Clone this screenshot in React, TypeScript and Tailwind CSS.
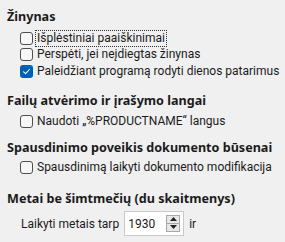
import React from "react";

const reg = { fontFamily: 'Roboto, "Liberation Sans", sans-serif' };
const bold = { fontFamily: '"Noto Sans", Roboto, sans-serif' };

function Box({ checked }: { checked?: boolean }) {
  if (checked) {
    return (
      <span className="w-[13px] h-[13px] rounded-[3px] bg-[#005fb8] flex items-center justify-center shrink-0">
        <svg width="9" height="9" viewBox="0 0 9 9">
          <path d="M1.6 4.9 L3.6 6.7 L7.4 2.5" fill="none" stroke="white" strokeWidth="1.1" strokeLinecap="round" strokeLinejoin="round" />
        </svg>
      </span>
    );
  }
  return <span className="w-[13px] h-[13px] rounded-[3px] border border-[#4f4f4f] bg-[#f7f7f7] shrink-0" />;
}

function Check({ label, checked, focus, className = "" }: { label: string; checked?: boolean; focus?: boolean; className?: string }) {
  return (
    <div className={"flex items-center pl-[20px] h-[16.5px] whitespace-nowrap " + className}>
      <Box checked={checked} />
      <span
        className={
          focus
            ? "ml-[3px] px-[1px] leading-[15px] outline outline-1 outline-dotted outline-[#333]"
            : "ml-[3px] px-[1px] leading-[15px]"
        }
      >
        {label}
      </span>
    </div>
  );
}

function Heading({ children, className = "" }: { children: React.ReactNode; className?: string }) {
  return (
    <div className={"h-[16px] flex items-center font-bold pl-[7px] text-[12.6px] whitespace-nowrap " + className} style={bold}>
      {children}
    </div>
  );
}

export default function App() {
  return (
    <div className="w-[285px] h-[242px] bg-[#f0f0f0] text-[12px] text-[#1b1b1b] overflow-hidden" style={reg}>
      <div className="pt-[9px] flex flex-col">
        <Heading>Žinynas</Heading>
        <Check className="mt-[5px]" label="Išplėstiniai paaiškinimai" focus />
        <Check label="Perspėti, jei neįdiegtas žinynas" />
        <Check label="Paleidžiant programą rodyti dienos patarimus" checked />
        <Heading className="mt-[13.5px]">Failų atvėrimo ir įrašymo langai</Heading>
        <Check className="mt-[4.5px]" label="Naudoti „%PRODUCTNAME“ langus" />
        <Heading className="mt-[10px]">Spausdinimo poveikis dokumento būsenai</Heading>
        <Check className="mt-[3.5px]" label="Spausdinimą laikyti dokumento modifikacija" />
        <Heading className="mt-[15px]">Metai be šimtmečių (du skaitmenys)</Heading>
        <div className="mt-[4px] h-[25px] flex items-center pl-[21px] whitespace-nowrap">
          <span>Laikyti metais tarp</span>
          <div className="ml-[5px] w-[60px] h-[25px] bg-white border border-[#c9c9c9] flex items-stretch">
            <span className="flex-1 pl-[3px] flex items-center">1930</span>
            <div className="w-[17px] flex flex-col justify-center py-[3px] pr-[3px] gap-0">
              <div className="h-[9px] bg-[#e7e7e7] border border-[#a8a8a8] flex items-center justify-center">
                <svg width="7" height="4" viewBox="0 0 7 4"><path d="M0 4 L3.5 0 L7 4 Z" fill="#222" /></svg>
              </div>
              <div className="h-[9px] bg-[#e7e7e7] border border-t-0 border-[#a8a8a8] flex items-center justify-center">
                <svg width="7" height="4" viewBox="0 0 7 4"><path d="M0 0 L3.5 4 L7 0 Z" fill="#222" /></svg>
              </div>
            </div>
          </div>
          <span className="ml-[5px]">ir</span>
        </div>
      </div>
    </div>
  );
}
